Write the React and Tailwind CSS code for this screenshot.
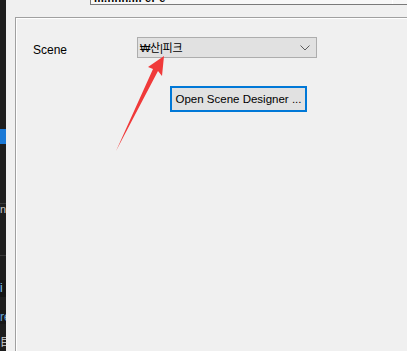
export default function App() {
    return (
        <div className="relative flex w-[407px] h-[351px] overflow-hidden bg-[#f0f0f0] font-['Segoe_UI','Liberation_Sans','Noto_Sans_CJK_KR',sans-serif] text-[12px] text-black">
            {/* dark side strip */}
            <div className="flex flex-col w-[6px] h-full bg-[#1e1e1e] overflow-hidden shrink-0">
                <div className="h-[129px]" />
                <div className="h-[15px] bg-[#1b79d6]" />
                <div className="h-[59px]" />
                <div className="h-px bg-[#3a3a3a]" />
                <div className="h-[10px] text-[11px] leading-[10px] text-[#c8c8c8] whitespace-nowrap">n</div>
                <div className="h-[41px]" />
                <div className="h-px bg-[#3a3a3a]" />
                <div className="h-[24px]" />
                <div className="h-[17px] bg-[#141414] text-[12px] leading-[17px] text-[#7cc4f0] whitespace-nowrap">i</div>
                <div className="h-[13px]" />
                <div className="h-[14px] bg-[#181818] text-[12px] leading-[14px] text-[#6aa7d8] whitespace-nowrap">re</div>
                <div className="h-[12px]" />
                <div className="h-[12px] text-[11px] leading-[12px] text-[#d0d0d0] whitespace-nowrap">目</div>
            </div>

            <div className="flex flex-col flex-1 min-w-0">
                {/* cut-off text field at top */}
                <div className="relative ml-[84px] h-[5px] border-l border-b border-[#7a7a7a] bg-[#f7f7f7] overflow-hidden">
                    <div className="absolute left-[3px] -top-[7px] text-[11px] leading-[11px] font-bold tracking-wide">m.nnn.m er e</div>
                    <div className="absolute right-[14px] top-0 h-full w-px bg-white" />
                </div>

                {/* group box */}
                <div className="mt-[12px] ml-[9px] flex-1 border-l border-t border-[#a0a0a0]">
                    <div className="h-full border-l border-t border-white pl-[16px] pt-[18px]">
                        <div className="flex items-center">
                            <div className="w-[104px] text-[12px] leading-[16px] pt-[5px]">Scene</div>
                            <div className="flex items-center w-[180px] h-[21px] border border-[#adadad] bg-[#e1e1e1] pl-[2px] pr-[6px]">
                                <span className="flex-1 text-[11px] leading-[14px] tracking-tight">₩산|피크</span>
                                <svg width="10" height="6" viewBox="0 0 10 6" fill="none">
                                    <path d="M0.5 0.5 L5 5 L9.5 0.5" stroke="#5c5c5c" strokeWidth="1" />
                                </svg>
                            </div>
                        </div>
                        <div className="mt-[28px] ml-[137px]">
                            <button className="block w-[137px] h-[26px] border-2 border-[#0078d7] bg-[#e1e1e1] text-[11.5px] leading-[16px] text-center">
                                Open Scene Designer ...
                            </button>
                        </div>
                    </div>
                </div>
            </div>

            {/* annotation arrow */}
            <svg className="absolute inset-0 pointer-events-none" width="407" height="351" viewBox="0 0 407 351">
                <polygon points="116,151 153,69 148,67 164,56 162,76 158,71" fill="#f03a3a" />
            </svg>
        </div>
    );
}
